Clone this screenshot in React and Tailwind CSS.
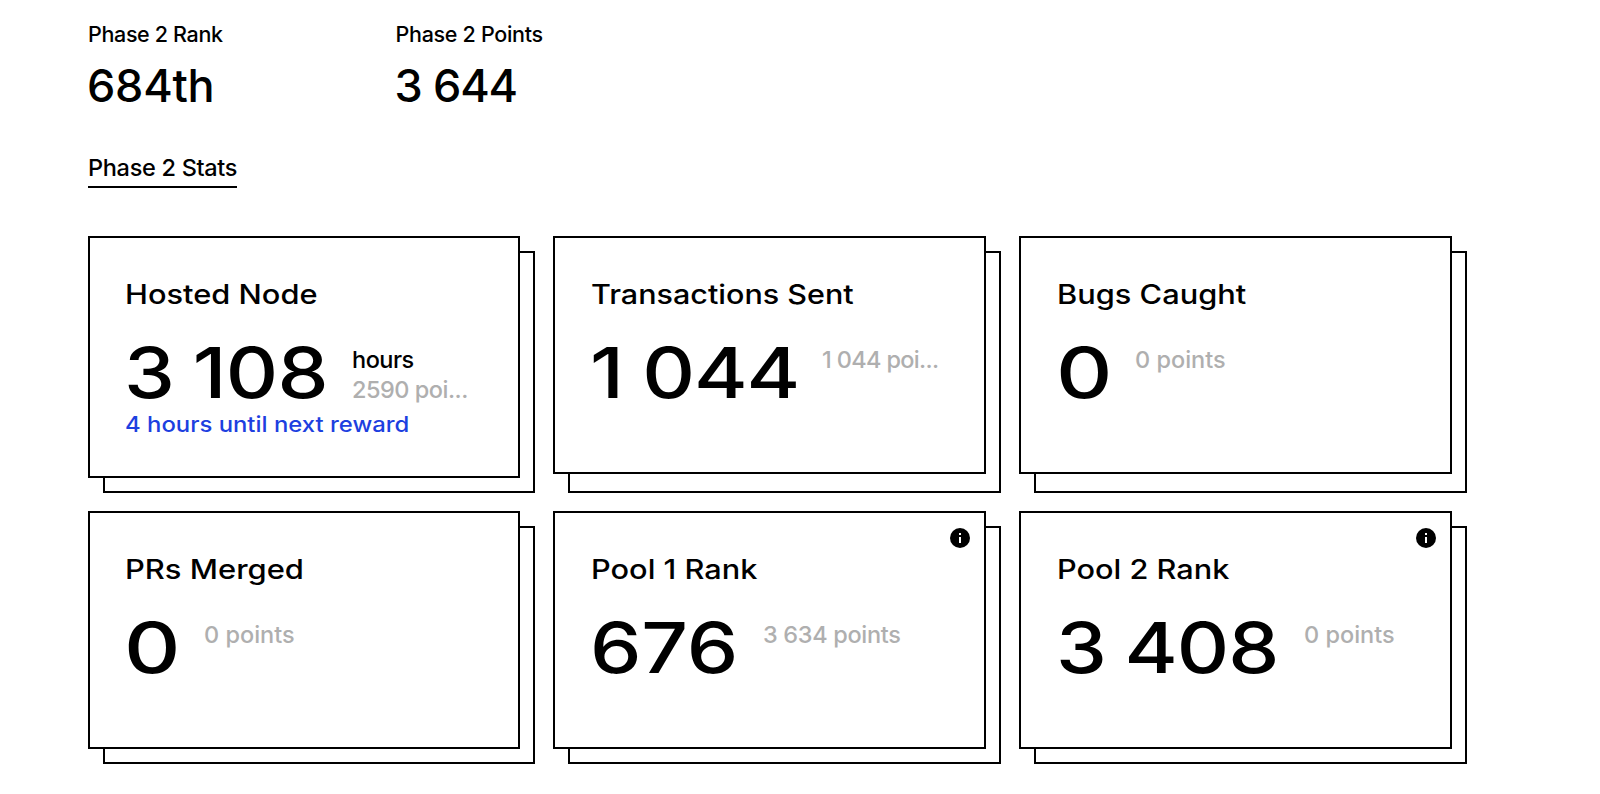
import React from "react";

const cards = [
  {
    title: "Hosted Node",
    titleFit: "scale-x-[1.14]",
    value: "3 108",
    valueFit: "scale-x-[1.16] tracking-[-0.6px] [word-spacing:-2px]",
    valueWidth: "w-[227px]",
    padLeft: "pl-[35px]",
    unit: "hours",
    points: "2590 poi...",
    pointsFit: "tracking-[-0.5px]",
    note: "4 hours until next reward",
  },
  {
    title: "Transactions Sent",
    titleFit: "scale-x-[1.13]",
    value: "1 044",
    valueFit: "scale-x-[1.17] tracking-[-1px] [word-spacing:-1px]",
    valueWidth: "w-[231px]",
    padLeft: "pl-9",
    points: "1 044 poi...",
    pointsFit: "tracking-[-0.65px]",
  },
  {
    title: "Bugs Caught",
    titleFit: "scale-x-[1.14]",
    value: "0",
    valueFit: "scale-x-[1.25]",
    valueWidth: "w-[78px]",
    padLeft: "pl-9",
    points: "0 points",
    pointsFit: "tracking-normal",
  },
  {
    title: "PRs Merged",
    titleFit: "scale-x-[1.145]",
    value: "0",
    valueFit: "scale-x-[1.25]",
    valueWidth: "w-[79px]",
    padLeft: "pl-[35px]",
    points: "0 points",
    pointsFit: "tracking-normal",
  },
  {
    title: "Pool 1 Rank",
    titleFit: "scale-x-[1.138]",
    value: "676",
    valueFit: "scale-x-[1.17] tracking-[-0.2px]",
    valueWidth: "w-[172px]",
    padLeft: "pl-9",
    points: "3 634 points",
    pointsFit: "tracking-[-0.33px]",
    info: true,
  },
  {
    title: "Pool 2 Rank",
    titleFit: "scale-x-[1.137]",
    value: "3 408",
    valueFit: "scale-x-[1.16] tracking-[-0.8px] [word-spacing:-2px]",
    valueWidth: "w-[247px]",
    padLeft: "pl-9",
    points: "0 points",
    pointsFit: "tracking-normal",
    info: true,
  },
];

function InfoIcon() {
  return (
    <svg viewBox="0 0 20 20" className="absolute top-[15px] right-[14px] size-5" aria-hidden="true">
      <circle cx="10" cy="10" r="10" fill="black" />
      <path d="M9 5h2v2H9zM9 9h2v6H9z" fill="white" />
    </svg>
  );
}

function StatCard({ card }) {
  return (
    <div className="grid">
      <div className="col-start-1 row-start-1 mt-[15px] ml-[15px] border-2 border-black bg-white" />
      <div
        className={`relative col-start-1 row-start-1 mr-[15px] mb-[15px] min-h-[238px] self-start border-2 border-black bg-white pt-[39px] pr-9 pb-[39px] ${card.padLeft}`}
      >
        {card.info && <InfoIcon />}
        <h3 className={`w-max origin-left text-[27px] leading-9 ${card.titleFit}`}>{card.title}</h3>
        <div className="mt-[25px] flex h-[69px]">
          <div className={`shrink-0 ${card.valueWidth}`}>
            <div className={`-ml-px w-max origin-left text-[70px] leading-[69px] font-[450] ${card.valueFit}`}>
              {card.value}
            </div>
          </div>
          <div className="pt-[7px] text-[23.5px] leading-[30px] whitespace-nowrap">
            {card.unit && <div className="tracking-[-0.5px]">{card.unit}</div>}
            <div className={`font-[550] text-[#afafaf] ${card.pointsFit}`}>{card.points}</div>
          </div>
        </div>
        {card.note && (
          <p className="mt-1.5 w-max origin-left scale-x-[1.137] text-[21px] leading-6 text-[#1d3fe0]">{card.note}</p>
        )}
      </div>
    </div>
  );
}

export default function App() {
  return (
    <main className="min-h-screen bg-white pt-[22px] pl-[88px] font-['Inter',sans-serif] font-medium text-black">
      <div className="flex">
        <div className="w-[307.5px]">
          <div className="text-[21.5px] leading-6 tracking-[-0.35px]">Phase 2 Rank</div>
          <div className="mt-3 -ml-px text-[45px] leading-[56px] tracking-[-0.25px]">684th</div>
        </div>
        <div>
          <div className="text-[21.5px] leading-6 tracking-[-0.3px]">Phase 2 Points</div>
          <div className="mt-3 -ml-px text-[45px] leading-[56px] tracking-[-1.3px] [word-spacing:1px]">3 644</div>
        </div>
      </div>
      <h2 className="mt-10 w-[149px] border-b-2 border-black pb-1 text-[23.5px] leading-7 tracking-[-0.3px] whitespace-nowrap">
        Phase 2 Stats
      </h2>
      <div className="mt-12 grid grid-cols-[447px_448px_448px] gap-[18px]">
        {cards.map((card) => (
          <StatCard key={card.title} card={card} />
        ))}
      </div>
    </main>
  );
}
